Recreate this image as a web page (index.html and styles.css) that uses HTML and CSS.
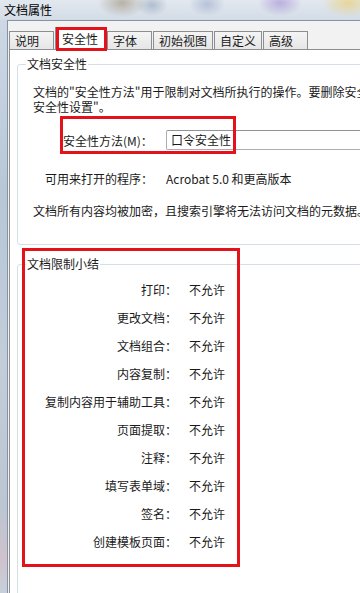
FILE: index.html
```html
<!DOCTYPE html>
<html lang="zh-CN">
<head>
<meta charset="utf-8">
<title>文档属性</title>
<link rel="stylesheet" href="styles.css">
</head>
<body>
<div class="app">
  <div class="titlebar"><span class="title">文档属性</span></div>
  <div class="window">
    <div class="glass-side"></div>
    <div class="client">
      <div class="tabs">
        <div class="tab">说明</div>
        <div class="tab selected">安全性</div>
        <div class="tab">字体</div>
        <div class="tab">初始视图</div>
        <div class="tab">自定义</div>
        <div class="tab">高级</div>
      </div>
      <div class="panel">
        <fieldset class="group group-security">
          <legend>文档安全性</legend>
          <div class="group-body security-body">
            <p class="desc">文档的"安全性方法"用于限制对文档所执行的操作。要删除安全<br>安全性设置"。</p>
            <div class="method-row">
              <span class="method-label">安全性方法(M)：</span>
              <div class="select-box">口令安全性</div>
            </div>
            <div class="open-row">
              <span class="open-label">可用来打开的程序：</span>
              <span class="open-value">Acrobat 5.0 和更高版本</span>
            </div>
            <p class="desc encrypt">文档所有内容均被加密，且搜索引擎将无法访问文档的元数据。</p>
          </div>
        </fieldset>
        <fieldset class="group group-summary">
          <legend>文档限制小结</legend>
          <div class="group-body summary-body">
            <span class="k">打印：</span><span class="v">不允许</span>
            <span class="k">更改文档：</span><span class="v">不允许</span>
            <span class="k">文档组合：</span><span class="v">不允许</span>
            <span class="k">内容复制：</span><span class="v">不允许</span>
            <span class="k">复制内容用于辅助工具：</span><span class="v">不允许</span>
            <span class="k">页面提取：</span><span class="v">不允许</span>
            <span class="k">注释：</span><span class="v">不允许</span>
            <span class="k">填写表单域：</span><span class="v">不允许</span>
            <span class="k">签名：</span><span class="v">不允许</span>
            <span class="k">创建模板页面：</span><span class="v">不允许</span>
          </div>
        </fieldset>
      </div>
    </div>
  </div>
  <div class="mark mark-tab"></div>
  <div class="mark mark-method"></div>
  <div class="mark mark-summary"></div>
</div>
</body>
</html>
```
FILE: styles.css
```css
* { box-sizing: border-box; margin: 0; padding: 0; }
html, body { width: 360px; height: 593px; overflow: hidden; }
body {
  font-family: "Noto Sans CJK SC", "Noto Sans", sans-serif;
  font-size: 12px;
  color: #1a1a1a;
  background: #f0f0f0;
}
.app {
  position: relative;
  width: 360px;
  height: 593px;
  display: flex;
  flex-direction: column;
  overflow: hidden;
}
.titlebar {
  height: 20px;
  flex: none;
  padding-left: 4px;
  line-height: 20px;
  color: #000;
  background:
    radial-gradient(ellipse 24px 14px at 122px 3px, rgba(150,135,110,.55), transparent),
    radial-gradient(ellipse 16px 11px at 152px 5px, rgba(120,140,170,.45), transparent),
    radial-gradient(ellipse 18px 12px at 207px 4px, rgba(120,140,185,.40), transparent),
    radial-gradient(ellipse 22px 13px at 280px 3px, rgba(150,120,205,.50), transparent),
    radial-gradient(ellipse 26px 14px at 348px 3px, rgba(235,205,110,.65), transparent),
    linear-gradient(#e2e8ef, #d3dce6);
}
.window { flex: 1; display: flex; min-height: 0; }
.glass-side {
  width: 7px;
  flex: none;
  background: linear-gradient(to bottom, #cdd8e4, #b8c6d6 30%, #c2cdd9 60%, #bcc6d3 85%, #cfc2cc 94%, #c6cfda);
}
.client {
  flex: 1;
  display: flex;
  flex-direction: column;
  min-width: 0;
  border-left: 1px solid #8593a4;
  border-top: 1px solid #8593a4;
  background: #f2f2f2;
  padding-left: 1px;
}
.tabs {
  height: 28px;
  flex: none;
  display: flex;
  align-items: flex-end;
}
.tab {
  height: 18px;
  min-width: 45px;
  padding: 0 5px;
  margin-right: 1px;
  line-height: 17px;
  border: 1px solid #8c8e94;
  border-bottom: none;
  background: linear-gradient(#f4f4f4, #e6e6e6);
  white-space: nowrap;
}
.tab.selected {
  position: relative;
  z-index: 1;
  width: 51px;
  height: 23px;
  margin-bottom: -1px;
  line-height: 21px;
  padding-left: 6px;
  background: #fff;
}
.panel {
  flex: 1;
  min-height: 0;
  background: #fff;
  border-top: 1px solid #8c8e94;
  border-left: 1px solid #8c8e94;
  padding-left: 7px;
}
.group {
  border: 1px solid #d5dfe5;
  border-radius: 3px;
  margin-right: -20px;
  padding: 0;
  min-width: 0;
}
.group legend {
  margin-left: 8px;
  padding: 0 1px;
  line-height: 14px;
}
.group-security { margin-top: 7px; }
.security-body { padding: 13px 0 26px 15px; }
.desc { line-height: 15px; white-space: nowrap; }
.method-row {
  margin-top: 16px;
  height: 20px;
  display: flex;
  align-items: center;
  padding-left: 30px;
}
.method-label { width: 103px; flex: none; white-space: nowrap; }
.select-box {
  flex: 1;
  height: 20px;
  line-height: 18px;
  padding-left: 4px;
  border: 1px solid #abadb3;
  border-top-color: #8f9298;
  border-radius: 2px;
  background: #fff;
  white-space: nowrap;
}
.open-row {
  margin-top: 21px;
  padding-left: 12px;
  display: flex;
  line-height: 15px;
  white-space: nowrap;
}
.open-label { width: 121px; flex: none; }
.encrypt { margin-top: 17px; }
.group-summary { margin-top: 12px; }
.summary-body {
  display: grid;
  grid-template-columns: 159px auto;
  column-gap: 12px;
  justify-content: start;
  padding: 5px 0 60px 0;
  line-height: 28px;
}
.summary-body .k { text-align: right; white-space: nowrap; }
.summary-body .v { white-space: nowrap; }
.mark {
  position: absolute;
  border: 3px solid #e3131b;
  z-index: 5;
}
.mark-tab { left: 56px; top: 27px; width: 51px; height: 24px; }
.mark-method { left: 60px; top: 116px; width: 176px; height: 38px; }
.mark-summary { left: 22px; top: 248px; width: 218px; height: 319px; }
```
